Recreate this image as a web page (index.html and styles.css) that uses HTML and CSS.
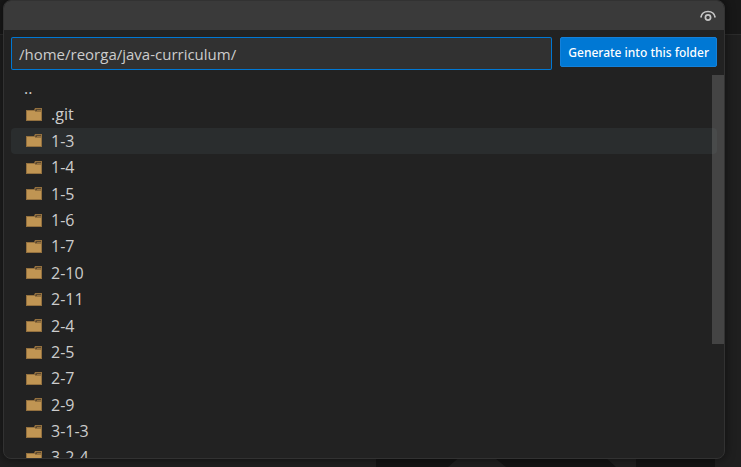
FILE: index.html
```html
<!DOCTYPE html>
<html lang="en">
<head>
<meta charset="utf-8">
<title>Choose a folder</title>
<link rel="stylesheet" href="styles.css">
</head>
<body>
<svg class="symbols" aria-hidden="true">
  <symbol id="folder" viewBox="0 0 16 13">
    <path fill="#94713f" d="M0 2h8l1-2h7v13H0z"/>
    <path fill="#c09553" d="M1 3h8v1h6v8H1z"/>
    <path fill="#5c4930" d="M10 1h5v2H9z"/>
    <path fill="#94713f" d="M11 2h4v1h-4z"/>
  </symbol>
</svg>
<div class="backdrop" aria-hidden="true">
  <div class="backdrop-top"></div>
  <svg class="backdrop-art" viewBox="0 0 365 12" width="365" height="12">
    <path fill="#131313" d="M0 0h86L72 12H0zM115 0h112l13 12H130zM260 0h79v12h-79z"/>
  </svg>
</div>
<main class="dialog">
  <header class="titlebar">
    <button class="eye" type="button" aria-label="Show hidden files">
      <svg viewBox="0 0 16 12" width="16" height="12" fill="none" stroke="#c5c5c5">
        <path stroke-width="1.7" d="M.8 7.500C1.500 3.500 4.300 1.500 8 1.500S14.500 3.500 15.200 7.500"/>
        <circle stroke-width="1.700" cx="8" cy="7.500" r="2.600"/>
      </svg>
    </button>
  </header>
  <form class="path-row">
    <div class="path-box">
      <input class="path" type="text" aria-label="Folder path" value="/home/reorga/java-curriculum/">
    </div>
    <button class="generate" type="button">Generate into this folder</button>
  </form>
  <div class="browser">
    <ul class="files">
      <li class="file">..</li>
      <li class="file"><svg class="icon"><use href="#folder"/></svg>.git</li>
      <li class="file active"><svg class="icon"><use href="#folder"/></svg>1-3</li>
      <li class="file"><svg class="icon"><use href="#folder"/></svg>1-4</li>
      <li class="file"><svg class="icon"><use href="#folder"/></svg>1-5</li>
      <li class="file"><svg class="icon"><use href="#folder"/></svg>1-6</li>
      <li class="file"><svg class="icon"><use href="#folder"/></svg>1-7</li>
      <li class="file"><svg class="icon"><use href="#folder"/></svg>2-10</li>
      <li class="file"><svg class="icon"><use href="#folder"/></svg>2-11</li>
      <li class="file"><svg class="icon"><use href="#folder"/></svg>2-4</li>
      <li class="file"><svg class="icon"><use href="#folder"/></svg>2-5</li>
      <li class="file"><svg class="icon"><use href="#folder"/></svg>2-7</li>
      <li class="file"><svg class="icon"><use href="#folder"/></svg>2-9</li>
      <li class="file"><svg class="icon"><use href="#folder"/></svg>3-1-3</li>
      <li class="file"><svg class="icon"><use href="#folder"/></svg>3-2-4</li>
    </ul>
    <div class="scrollbar"></div>
  </div>
</main>
</body>
</html>
```
FILE: styles.css
```css
* {
  box-sizing: border-box;
}

body {
  margin: 0;
  height: 100vh;
  overflow: hidden;
  background: #1f1f1f;
  color: #ccc;
  font-family: "Open Sans", "Noto Sans", sans-serif;
  font-size: 15px;
}

.symbols {
  position: absolute;
  width: 0;
  height: 0;
}

.backdrop {
  position: absolute;
  inset: 0;
}

.backdrop-top {
  height: 35px;
  background: #181818;
  border-bottom: 1px solid #2b2b2b;
}

.backdrop-art {
  position: absolute;
  right: 0;
  bottom: 0;
}

.dialog {
  position: relative;
  display: flex;
  flex-direction: column;
  height: calc(100vh - 8px);
  margin: 0 16px 8px 3px;
  overflow: hidden;
  background: #222;
  border: 1px solid #323232;
  border-radius: 8px;
  box-shadow: 0 0 8px 2px rgba(0, 0, 0, 0.36);
}

.titlebar {
  display: flex;
  flex: none;
  align-items: center;
  justify-content: flex-end;
  height: 29px;
  padding: 0 8px;
  background: #3a3a3a;
}

.eye {
  display: flex;
  padding: 0;
  border: 0;
  background: none;
}

.path-row {
  display: flex;
  flex: none;
  align-items: flex-start;
  gap: 8px;
  padding: 7px 7px 5px;
}

.path-box {
  display: flex;
  flex: 1;
  min-width: 0;
  height: 33px;
  padding: 1px;
  border-radius: 2px;
  background: #0078d4;
}

.path {
  flex: 1;
  min-width: 0;
  padding: 0 7px;
  border: 0;
  border-radius: 1px;
  outline: 0;
  background: #313131;
  color: #ccc;
  font: inherit;
}

.generate {
  height: 30px;
  padding: 0 7px;
  border: 1px solid #1481da;
  border-radius: 2px;
  background: #0078d4;
  color: #fff;
  font: 500 12px "Noto Sans", "Open Sans", sans-serif;
  white-space: nowrap;
}

.browser {
  position: relative;
  flex: 1;
  min-height: 0;
  overflow: hidden;
}

.files {
  margin: 0;
  padding: 0 7px;
  list-style: none;
  font-size: 16px;
}

.file {
  display: flex;
  align-items: center;
  padding-left: 13px;
  border-radius: 4px;
  line-height: 1.65;
}

.active {
  background: #2a2d2e;
}

.icon {
  width: 16px;
  height: 13px;
  margin: 0 9px 0 2px;
}

.scrollbar {
  position: absolute;
  top: 0;
  right: 0;
  width: 12px;
  height: calc(70% + 1px);
  background: rgba(121, 121, 121, 0.4);
}
```
